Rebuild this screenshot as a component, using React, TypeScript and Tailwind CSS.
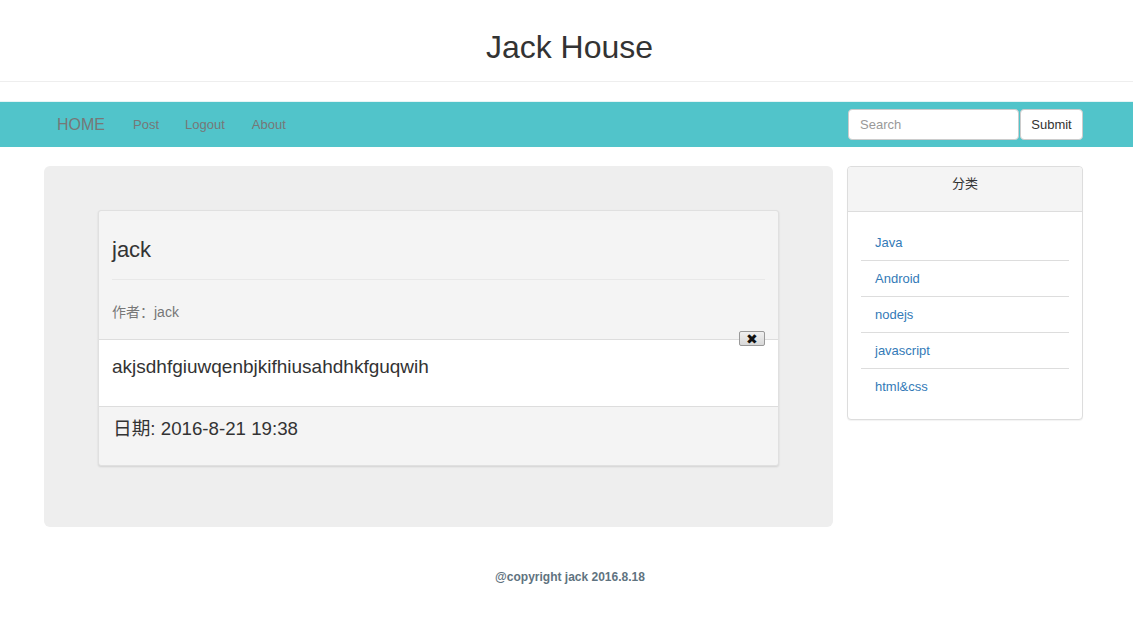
import React from "react";

const categories = ["Java", "Android", "nodejs", "javascript", "html&css"];

const App = () => {
  return (
    <div className="min-h-screen bg-white text-[14px] text-[#333] font-['Liberation_Sans','Noto_Sans_CJK_SC',sans-serif]">
      <header className="h-[82px] border-b border-[#eee] flex items-center justify-center">
        <h1 className="text-[32px] leading-none text-[#333] pt-[12px] pl-[6px]">Jack House</h1>
      </header>

      <nav className="mt-[19px] h-[46px] bg-[#51c4ca] border-t border-[#e6f4f5] flex items-center pl-[57px] pr-[50px]">
        <span className="text-[16px] text-[#777]">HOME</span>
        <span className="ml-[28px] text-[13px] text-[#777]">Post</span>
        <span className="ml-[26px] text-[13px] text-[#777]">Logout</span>
        <span className="ml-[27px] text-[13px] text-[#777]">About</span>
        <div className="ml-auto flex">
          <input
            placeholder="Search"
            className="w-[171px] h-[31px] rounded-[4px] border border-[#ccc] bg-white px-[11px] text-[13px] text-[#555] placeholder-[#999] outline-none"
          />
          <button className="ml-px w-[63px] h-[31px] rounded-[4px] border border-[#ccc] bg-white text-[13px] text-[#333]">
            Submit
          </button>
        </div>
      </nav>

      <main className="flex items-start gap-[14px] pl-[44px] pr-[50px] mt-[19px]">
        <section className="w-[789px] h-[361px] rounded-[6px] bg-[#eee] pt-[44px] px-[54px]">
          <div className="relative rounded-[3px] border border-[#e0e0e0] bg-[#f4f4f4] shadow-[0_1px_2px_rgba(0,0,0,0.12)]">
            <div className="px-[13px] border-b border-[#ddd]">
              <h2 className="pt-[26px] pb-[17px] text-[22px] leading-[25px] text-[#333] border-b border-[#e8e8e8]">jack</h2>
              <p className="pt-[22px] pb-[17px] text-[14px] leading-[20px] text-[#777]">作者：jack</p>
            </div>
            <button className="absolute right-[13px] top-[120px] w-[26px] h-[15px] rounded-[2px] border border-[#999] bg-gradient-to-b from-[#f0f0f0] to-[#d8d8d8] flex items-center justify-center text-[14px] leading-none text-[#111]">
              ✖
            </button>
            <div className="bg-white px-[13px] pt-[15px] h-[67px] border-b border-[#ddd]">
              <p className="text-[19px] leading-[24px] text-[#333]">akjsdhfgiuwqenbjkifhiusahdhkfguqwih</p>
            </div>
            <div className="px-[14px] pt-[10px] h-[58px]">
              <p className="text-[18.7px] leading-[24px] text-[#333]">日期: 2016-8-21 19:38</p>
            </div>
          </div>
        </section>

        <aside className="w-[236px] rounded-[4px] border border-[#ddd] bg-white shadow-[0_1px_1px_rgba(0,0,0,0.05)]">
          <div className="h-[45px] bg-[#f4f4f4] border-b border-[#ddd] text-center pt-[7px] text-[13px] text-[#333] rounded-t-[4px]">
            分类
          </div>
          <ul className="px-[13px] pt-[13px] pb-[14px]">
            {categories.map((c, i) => (
              <li
                key={c}
                className={`h-[36px] flex items-center px-[14px] text-[13px] text-[#337ab7] ${i < categories.length - 1 ? "border-b border-[#ddd]" : ""}`}
              >
                {c}
              </li>
            ))}
          </ul>
        </aside>
      </main>

      <footer className="mt-[41px] text-center text-[12px] font-bold text-[#5f7380] pl-[7px]">
        @copyright jack 2016.8.18
      </footer>
    </div>
  );
};

export default App;
